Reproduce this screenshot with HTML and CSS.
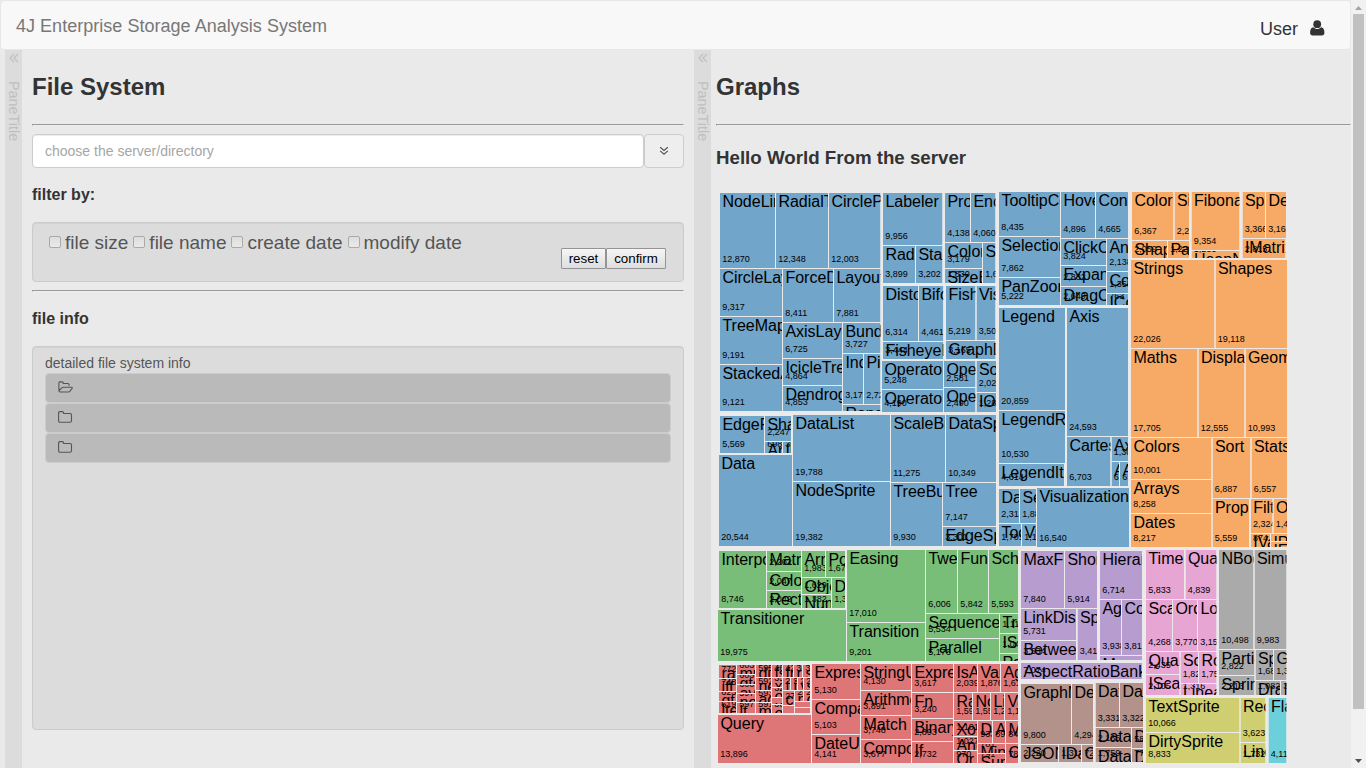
FILE: index.html
```html
<!DOCTYPE html>
<html lang="en">
<head>
<meta charset="utf-8">
<title>4J Enterprise Storage Analysis System</title>
<link rel="stylesheet" href="styles.css">
</head>
<body>
<div class="page">
  <nav class="navbar">
    <span class="brand">4J Enterprise Storage Analysis System</span>
    <span class="user">User
      <svg class="user-icon" width="15" height="16" viewBox="0 0 15 16"><circle cx="7.2" cy="4.2" r="3.9"/><path d="M3.4 7.2C1 7.4.1 9.6.1 12.7c0 1.8 1 2.8 2.6 2.8h9.2c1.6 0 2.5-1 2.5-2.8 0-3.100-.9-5.300-3.300-5.500C10 8.400 8.700 9 7.250 9S4.500 8.400 3.400 7.200z"/></svg>
    </span>
  </nav>
  <main class="panes">
    <aside class="strip">
      <svg class="chev" width="10" height="10" viewBox="0 0 10 10"><path d="M5 .8L1 5l4 4.200M9 .8L5 5l4 4.200"/></svg>
      <span class="strip-title">PaneTitle</span>
    </aside>
    <section class="files">
      <h2>File System</h2>
      <hr>
      <div class="picker">
        <input class="path" type="text" placeholder="choose the server/directory">
        <button class="drop" type="button"><svg width="10" height="10" viewBox="0 0 10 10"><path d="M1.200 1.200L5 4.400l3.800-3.200M1.200 4.900L5 8.100l3.800-3.200"/></svg></button>
      </div>
      <h4 class="filter-title">filter by:</h4>
      <div class="well filters">
        <div class="checks">
          <label><input type="checkbox">file size</label>
          <label><input type="checkbox">file name</label>
          <label><input type="checkbox">create date</label>
          <label><input type="checkbox">modify date</label>
        </div>
        <div class="actions"><button class="btn reset" type="button">reset</button><button class="btn confirm" type="button">confirm</button></div>
      </div>
      <hr class="hr-tight">
      <h4 class="info-title">file info</h4>
      <div class="well info">
        <div class="info-label">detailed file system info</div>
        <div class="row"><svg width="15" height="12" viewBox="0 0 15 12"><path d="M.9 9.800V1.900q0-1 1-1h2.300q1 0 1 1v.6h4.800q1 0 1 1v1.300M.9 9.800q0 1.200 1.300 1.200h8.400q.7 0 1.200-.6l2.200-2.900q.8-1.200-.6-1.200H5.100q-.8 0-1.300.6z"/></svg></div>
        <div class="row"><svg width="15" height="12" viewBox="0 0 15 12"><path d="M.6 2q0-1.400 1.400-1.400h2.200q1.400 0 1.400 1.400v.5h6.500q1.400 0 1.400 1.400v5.900q0 1.400-1.400 1.400H2q-1.400 0-1.400-1.400z"/></svg></div>
        <div class="row"><svg width="15" height="12" viewBox="0 0 15 12"><path d="M.6 2q0-1.400 1.400-1.400h2.200q1.400 0 1.400 1.400v.5h6.500q1.400 0 1.400 1.400v5.900q0 1.400-1.400 1.400H2q-1.400 0-1.400-1.400z"/></svg></div>
      </div>
    </section>
    <aside class="strip">
      <svg class="chev" width="10" height="10" viewBox="0 0 10 10"><path d="M5 .8L1 5l4 4.200M9 .8L5 5l4 4.200"/></svg>
      <span class="strip-title">PaneTitle</span>
    </aside>
    <section class="graphs">
      <h2>Graphs</h2>
      <hr>
      <h3>Hello World From the server</h3>
      <svg class="treemap" id="treemap" width="574" height="578" viewBox="716 190 574 578"></svg>
    </section>
  </main>
</div>
<div class="scrollbar">
  <svg width="7" height="4" viewBox="0 0 7 4"><path d="M0 4L3.500 0 7 4z" fill="#a3a3a3"/></svg>
  <div class="thumb"></div>
  <svg class="down" width="7" height="4" viewBox="0 0 7 4"><path d="M0 0L3.500 4 7 0z" fill="#505050"/></svg>
</div>
<script src="treemap.js"></script>
</body>
</html>
```
FILE: styles.css
```css
* { box-sizing: border-box; }
body { margin: 0; height: 768px; overflow: hidden; display: flex; background: #eaeaea; color: #333; font-family: "Liberation Sans", Arial, sans-serif; font-size: 14px; line-height: 20px; }
.page { width: 1351px; height: 768px; overflow: hidden; display: flex; flex-direction: column; flex: none; }
.navbar { margin-left: 0; height: 50px; flex: none; display: flex; justify-content: space-between; padding: 0 25px 0 15px; background: #f8f8f8; border: 1px solid #e7e7e7; border-radius: 4px; font-size: 18px; }
.brand { color: #777; padding-top: 15px; letter-spacing: .025px; }
.user { display: flex; gap: 12px; padding-top: 18px; }
.user-icon { fill: #333; margin-top: 1px; }
.panes { flex: 1; min-height: 0; display: flex; padding-left: 5px; }
.strip { width: 17px; flex: none; background: #dcdcdc; color: #bfbfbf; display: flex; flex-direction: column; align-items: center; }
.chev { margin-top: 3px; fill: none; stroke: #bfbfbf; stroke-width: 1.2; }
.strip-title { writing-mode: vertical-rl; line-height: 17px; margin-top: 18px; font-size: 14.4px; }
.files { width: 672px; padding: 0 10px; flex: none; }
.graphs { flex: 1; padding-left: 5px; }
h2 { margin: 0; font-size: 24px; line-height: 28px; padding-top: 23px; height: 74px; }
hr { margin: 0; border: 1px inset #eee; height: 2px; }
.picker { display: flex; margin-top: 8px; height: 34px; }
.path { width: 612px; height: 34px; border: 1px solid #ccc; border-radius: 4px; padding: 6px 12px; font: 14px/20px "Liberation Sans", Arial, sans-serif; background: #fff; box-shadow: inset 0 1px 1px rgba(0,0,0,.075); }
.path::placeholder { color: #a6a6a6; }
.drop { width: 40px; border: 1px solid #ccc; border-radius: 4px; background: #eee; padding: 0; display: flex; align-items: center; justify-content: center; }
.drop svg { fill: none; stroke: #555; stroke-width: 1.2; }
h4 { margin: 0; font-size: 16px; line-height: 18px; }
.filter-title { padding-top: 18px; height: 54px; }
.info-title { padding-top: 18px; height: 54px; }
.well { border: 1px solid #cbcbcb; border-radius: 4px; background: #dcdcdc; color: #555; box-shadow: inset 0 1px 1px rgba(0,0,0,.05); }
.filters { height: 60px; padding: 9px 17px 0 16px; }
.checks { display: flex; gap: 5px; font-size: 19px; line-height: 22px; height: 16px; }
.checks label { display: flex; }
.checks input { appearance: none; margin: 4px 4px 0 0; width: 12px; height: 12px; border: 1px solid #aaa; border-radius: 2px; background: linear-gradient(#ddd, #eaeaea); }
.actions { display: flex; justify-content: flex-end; }
.btn { height: 21px; border: 1px solid #949494; border-radius: 1px; background: linear-gradient(#f6f6f6, #dedede); color: #000; font: 13.33px/17px "Liberation Sans", Arial, sans-serif; padding: 1px 0; }
.reset { width: 45px; }
.confirm { width: 60px; }
.hr-tight { margin-top: 8px; }
.info { height: 384px; padding: 6px 12px; }
.info-label { height: 20px; }
.row { height: 30px; border: 1px solid #ccc; border-radius: 4px; background: #bababa; padding: 7px 12px; line-height: 0; }
.row svg { fill: none; stroke: #555; stroke-width: 1.1; }
h3 { margin: 0; font-size: 18.72px; line-height: 22px; padding-top: 21px; height: 64px; }
.treemap { display: block; }
.treemap rect { fill-opacity: .6; }
.treemap .name { font-size: 16px; fill: #000; }
.treemap .value { font-size: 9px; fill: #000; }
.c0 { fill: #1f77b4; } .c1 { fill: #ff7f0e; } .c2 { fill: #2ca02c; } .c3 { fill: #d62728; } .c4 { fill: #9467bd; }
.c5 { fill: #8c564b; } .c6 { fill: #e377c2; } .c7 { fill: #7f7f7f; } .c8 { fill: #bcbd22; } .c9 { fill: #17becf; }
.scrollbar { width: 15px; height: 768px; background: #f1f1f1; display: flex; flex-direction: column; align-items: center; padding-top: 6px; flex: none; }
.thumb { width: 11px; height: 695px; margin-top: 4px; background: #c1c1c1; }
.down { margin-top: 50px; }
```
FILE: treemap.js
```js
// Each row: left, top, right, bottom, label, value
const cells = [
[
[720,193,775,268,'NodeLinkTreeLayout','12,870'],[776,193,828,268,'RadialTreeLayout','12,348'],[829,193,880.5,268,'CirclePackingLayout','12,003'],
[720,269,782,316,'CircleLayout','9,317'],[783,269,833,322,'ForceDirectedLayout','8,411'],[834,269,880.5,322,'Layout','7,881'],
[720,317,782,364,'TreeMapLayout','9,191'],[720,365,782,411,'StackedAreaLayout','9,121'],
[783,323,842,358,'AxisLayout','6,725'],[843,323,880.5,353,'BundledEdgeRouter','3,727'],[843,354,863,404,'IndentedTreeLayout','3,174'],[864,354,880.5,404,'PieLayout','2,728'],
[783,359,842,385,'IcicleTreeLayout','4,864'],[783,386,842,411,'DendrogramLayout','4,853'],[843,405,880.5,411,'RandomLayout',''],
[883,193,942.5,245,'Labeler','9,956'],[883,246,915,283,'RadialLabeler','3,899'],[916,246,942.5,283,'StackedAreaLabeler','3,202'],
[883,286,918,341,'Distortion','6,314'],[919,286,943.3,341,'BifocalDistortion','4,461'],[883,342,943.3,359,'FisheyeDistortion','3,444'],
[945,193,970,242,'PropertyEncoder','4,138'],[971,193,995.5,242,'Encoder','4,060'],[945,243,982,268,'ColorEncoder','3,179'],[983,243,995.5,283,'ShapeEncoder','1,690'],[945,269,982,283,'SizeEncoder','1,830'],
[946,286,975.5,340,'FisheyeTreeFilter','5,219'],[976.5,286,995.5,340,'VisibilityFilter','3,509'],[946,341,995.5,359,'GraphDistanceFilter','3,165'],
[882,361,943,389,'OperatorList','5,248'],[882,390,943,412,'OperatorSequence','4,190'],[944,361,975.5,387,'OperatorSwitch','2,581'],[944,388,975.5,412,'Operator','2,490'],[976.5,361,996,392,'SortOperator','2,023'],[976.5,393,996,412,'IOperator','1,286'],
[720,416,764,453,'EdgeRenderer','5,569'],[765,416,791,441,'ShapeRenderer','2,247'],[765,442,782,453,'ArrowType','698'],[783,442,791,453,'IRenderer','353'],
[719,455,792,546,'Data','20,544'],[793,415,890,481,'DataList','19,788'],[793,482,890,546,'NodeSprite','19,382'],
[891,415,945,482,'ScaleBinding','11,275'],[946,415,996,482,'DataSprite','10,349'],[891,483,942,546,'TreeBuilder','9,930'],[943,483,996,526,'Tree','7,147'],[943,527,996,546,'EdgeSprite','3,301'],
[999,192,1060,236,'TooltipControl','8,435'],[999,237,1060,277,'SelectionControl','7,862'],[999,278,1060,305,'PanZoomControl','5,222'],
[1061,192,1095,238,'HoverControl','4,896'],[1096,192,1128,238,'ControlList','4,665'],[1061,239,1106,265,'ClickControl','3,824'],[1061,266,1106,286,'ExpandControl','2,832'],[1061,287,1106,305,'DragControl','2,649'],
[1107,239,1128,271,'AnchorControl','2,138'],[1107,272,1128,293,'Control','1,353'],[1107,294,1128,305,'IControl','763'],
[999,308,1065,410,'Legend','20,859'],[999,411,1065,463,'LegendRange','10,530'],[999,464,1064,486,'LegendItem','4,614'],
[1067,308,1128,436,'Axis','24,593'],[1067,437,1110.5,486,'CartesianAxes','6,703'],[1111.5,437,1128,461,'AxisGridLine','1,302'],[1111.5,462,1119,486,'AxisLabel','636'],[1120,462,1128,486,'Axes','652'],
[999,489,1019,523,'DataEvent','2,313'],[1020,489,1036,523,'SelectionEvent','1,880'],[999,524,1021,546,'TooltipEvent','1,701'],[1022,524,1036,546,'VisualizationEvent','1,117'],[1037,488,1129,547,'Visualization','16,540']
],[
[1132,192,1173.5,240,'ColorPalette','6,367'],[1174.5,192,1189,240,'SizePalette','2,291'],[1132,241,1167,258,'ShapePalette','2,059'],[1168,241,1189,258,'Palette','1,229'],
[1191.5,192,1239.5,250,'FibonacciHeap','9,354'],[1191.5,251,1239.5,258,'HeapNode','1,233'],
[1242.5,192,1265,238,'SparseMatrix','3,366'],[1266,192,1286,238,'DenseMatrix','3,165'],[1242.5,239,1285.5,258,'IMatrix','2,815'],
[1131,260,1214.500,348,'Strings','22,026'],[1215.5,260,1287,348,'Shapes','19,118'],[1131,349,1197.500,437,'Maths','17,705'],[1198.5,349,1244.500,437,'Displays','12,555'],[1245.5,349,1287,437,'Geometry','10,993'],
[1131,438,1211.500,479,'Colors','10,001'],[1131,480,1211.500,513,'Arrays','8,258'],[1131,514,1211.500,547,'Dates','8,217'],
[1212.5,438,1250.500,498,'Sort','6,887'],[1251.5,438,1287,498,'Stats','6,557'],[1212.5,499,1249,547,'Property','5,559'],
[1250.8,499,1272.500,533,'Filter','2,324'],[1273.5,499,1287,533,'Orientation','1,486'],[1250.8,534,1270,547,'IValueProxy','874'],[1271,534,1287,541,'IPredicate',''],[1271,542,1287,547,'IEvaluable','']
],[
[719,551,766,608,'Interpolator','8,746'],[767,551,801,571,'MatrixInterpolator','2,202'],[767,572,801,590,'ColorInterpolator','2,047'],[767,591,801,608,'RectangleInterpolator','2,042'],
[802,551,825,577,'ArrayInterpolator','1,983'],[826,551,845,577,'PointInterpolator','1,675'],[802,578,831,594,'ObjectInterpolator','1,629'],[802,595,831,608,'NumberInterpolator','1,382'],[832,578,845,608,'DateInterpolator','1,375'],
[718,610,846,661,'Transitioner','19,975'],[847,550,925,622,'Easing','17,010'],[847,623,925,661,'Transition','9,201'],
[926,550,957,613,'Tween','6,006'],[958,550,988,613,'FunctionSequence','5,842'],[989,550,1018,613,'Scheduler','5,593'],
[926,614,999,638,'Sequence','5,534'],[926,639,999,661,'Parallel','5,176'],[1000,614,1018,633,'TransitionEvent','1,116'],[1000,634,1018,653,'ISchedulable','1,041'],[1000,654,1018,661,'Pause','']
],[
[719,665,736,678,'range','772'],[719,679,736,691,'iff','748'],[719,692,736,701,'gt','625'],[719,702,736,713,'lte','619'],
[737,665,755,674,'mul','603'],[737,675,755,684,'gte','603'],[737,685,755,693,'average','600'],[737,694,755,702,'not','597'],[737,703,755,713,'lt','597'],
[756,665,771,677,'div','595'],[756,678,771,690,'neq','592'],[756,691,771,702,'add','593'],[756,703,771,713,'mod','591'],
[772,665,782,677,'fs','460'],[772,678,782,687,'xor','354'],[772,688,782,697,'or','323'],[772,698,782,704,'update',''],[772,705,782,713,'or','307'],
[783,665,793,677,'fn','420'],[783,678,790,690,'to','296'],[783,691,794,705,'count','277'],[783,706,794,713,'',''],
[794,665,802,677,'r','363'],[791,678,797,690,'is','264'],[798,678,803,690,'variance','264'],[804,678,810,690,'select','283'],
[803,665,810,677,'stddev','335'],[795,691,803,701,'max','243'],[804,691,810,701,'count','277'],[795,702,810,707,'',''],[795,708,810,713,'',''],
[718,715,811,763,'Query','13,896'],[812,664,860,699,'Expression','5,130'],[812,700,860,734,'Comparison','5,103'],[812,735,860,763,'DateUtil','4,141'],
[861,664,911,690,'StringUtil','4,130'],[861,691,911,715,'Arithmetic','3,891'],[861,716,911,739,'Match','3,748'],[861,740,911,763,'CompositeExpression','3,677'],
[912,664,953,692,'ExpressionIterator','3,617'],[912,693,953,718,'Fn','3,240'],[912,719,953,741,'BinaryExpression','2,893'],[912,742,953,763,'If','2,732'],
[954,664,977,692,'IsA','2,039'],[978,664,1000,692,'Variance','1,876'],[1001,664,1018,692,'AggregateExpression','1,616'],
[954,693,972,720,'Range','1,594'],[973,693,990,720,'Not','1,554'],[991,693,1004,720,'Literal','1,214'],[1005,693,1018,720,'Variable','1,124'],
[954,721,977,736,'Xor','1,101'],[954,737,977,750,'And','1,027'],[954,751,977,763,'Or','970'],
[978,721,992,743,'Distinct','933'],[993,721,1005,743,'Average','891'],[1006,721,1018,743,'Minimum','843'],
[978,744,1005,753,'Minimum','781'],[978,754,1005,763,'Sum','791'],[1006,744,1018,763,'Count','781']
],[
[1021,551,1064,608,'MaxFlowMinCut','7,840'],[1065,551,1097,608,'ShortestPaths','5,914'],[1021,609,1076,640,'LinkDistance','5,731'],[1021,641,1076,660,'BetweennessCentrality','3,534'],[1077.5,609,1097,660,'SpanningTree','3,416'],
[1100,551,1142,599,'HierarchicalCluster','6,714'],[1100,600,1121,655,'AgglomerativeCluster','3,938'],[1122,600,1142,655,'CommunityStructure','3,812'],[1100,656,1142,660,'MergeEdge',''],[1021,663,1142,679,'AspectRatioBanker','7,074']
],[
[1021,684,1071,744,'GraphMLConverter','9,800'],[1072,684,1093,744,'DelimitedTextConverter','4,294'],[1021,745,1058,762,'JSONConverter','2,220'],[1059,745,1081,762,'IDataConverter','1,314'],[1082,745,1093,762,'Converters','721'],
[1095.5,683,1119,727,'DataSource','3,331'],[1120,683,1143,727,'DataUtil','3,322'],[1095.5,728,1131,747,'DataSchema','2,165'],[1132,728,1143,748,'DataSet','586'],[1095.5,748,1131,762,'DataField','1,759'],[1132,749,1143,762,'DataTable','772']
],[
[1146,550,1184,599,'TimeScale','5,833'],[1185.5,550,1216.5,599,'QuantitativeScale','4,839'],[1146,600,1172,651,'Scale','4,268'],[1173,600,1197,651,'OrdinalScale','3,770'],[1198,600,1216.5,651,'LogScale','3,151'],
[1146,652,1179.5,674,'QuantileScale','2,435'],[1146,675,1179.5,695,'IScaleMap','2,105'],[1180.5,652,1198,683,'ScaleType','1,821'],[1199,652,1216.5,683,'RootScale','1,756'],[1180.5,684,1216.5,695,'LinearScale','1,316']
],[
[1219,550,1253.5,649,'NBodyForce','10,498'],[1254.5,550,1286.5,649,'Simulation','9,983'],[1219,650,1254.500,675,'Particle','2,822'],[1219,676,1254.500,695,'SpringForce','2,213'],
[1255.5,650,1273,680,'Spring','1,681'],[1274,650,1286.500,680,'GravityForce','1,336'],[1255.5,681,1280,695,'DragForce','1,082'],[1281,681,1286.500,695,'IForce','319']
],[
[1146,698,1239.500,732,'TextSprite','10,066'],[1146,733,1239.500,763,'DirtySprite','8,833'],[1240.5,698,1265.5,742,'RectSprite','3,623'],[1240.5,743,1265.5,763,'LineSprite','1,732']
],[
[1268.500,698,1286.500,763,'FlareVis','4,116']
]];

const NS = 'http://www.w3.org/2000/svg';
const root = document.getElementById('treemap');

function add(parent, tag, attrs, text) {
  const el = document.createElementNS(NS, tag);
  for (const k in attrs) el.setAttribute(k, attrs[k]);
  if (text) el.textContent = text;
  parent.appendChild(el);
  return el;
}

cells.forEach((group, color) => {
  for (const [x, y, r, b, name, value] of group) {
    const w = r - x, h = b - y;
    const cell = add(root, 'svg', { x, y, width: w, height: h });
    add(cell, 'rect', { width: w, height: h, class: 'c' + color });
    if (value) add(cell, 'text', { x: 2.3, y: h - 6, class: 'value' }, value);
    if (name) add(cell, 'text', { x: 2.4, y: 14, class: 'name' }, name);
  }
});
```
